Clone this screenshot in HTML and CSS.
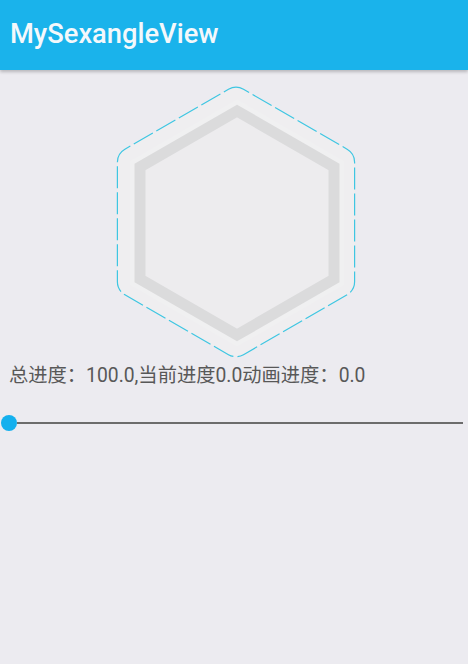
FILE: index.html
```html
<!DOCTYPE html>
<html>
<head>
<meta charset="utf-8">
<link rel="stylesheet" href="styles.css">
</head>
<body>
<header class="toolbar"><h1 class="title">MySexangleView</h1></header>
<main class="content">
  <div class="hex-wrap">
    <svg class="hex" width="244" height="280" viewBox="0 0 244 280">
      <path class="hex-outer" d="M114.5 7.33 A15 15 0 0 1 129.5 7.33 L233.1 67.17 A15 15 0 0 1 240.6 80.16 L240.6 199.84 A15 15 0 0 1 233.1 212.83 L129.5 272.67 A15 15 0 0 1 114.5 272.67 L10.9 212.83 A15 15 0 0 1 3.4 199.84 L3.4 80.16 A15 15 0 0 1 10.9 67.17 Z"/>
      <path class="hex-halo" d="M123 29 L220 85 L220 197 L123 253 L26 197 L26 85 Z"/>
      <path class="hex-inner" d="M123 29 L220 85 L220 197 L123 253 L26 197 L26 85 Z"/>
    </svg>
  </div>
  <p class="progress-text">总进度：100.0,当前进度0.0动画进度：0.0</p>
  <div class="slider">
    <span class="slider-thumb"></span>
    <span class="slider-track"></span>
  </div>
</main>
</body>
</html>
```
FILE: styles.css
```css
html, body {
  margin: 0;
  padding: 0;
}
body {
  width: 468px;
  height: 664px;
  background: #ecebf0;
  font-family: Roboto, "Noto Sans CJK SC", sans-serif;
  overflow: hidden;
}
.toolbar {
  height: 70px;
  background: #1ab3eb;
  display: flex;
  align-items: center;
  padding-left: 10px;
  box-shadow: 0 2px 3px rgba(0, 0, 0, 0.22);
  position: relative;
}
.title {
  margin: 0;
  margin-top: -3px;
  font-family: Roboto, sans-serif;
  font-weight: 500;
  font-size: 27.3px;
  color: #f4f8fb;
  letter-spacing: 0;
}
.content {
  display: flex;
  flex-direction: column;
}
.hex-wrap {
  margin-top: 12px;
  display: flex;
  justify-content: center;
  padding-left: 4px;
}
.hex {
  display: block;
}
.hex-outer {
  fill: #efeef0;
  stroke: #3ec6e2;
  stroke-width: 1.2;
  stroke-dasharray: 22 4;
}
.hex-halo {
  fill: none;
  stroke: #f0f0f1;
  stroke-width: 20;
  stroke-linejoin: miter;
}
.hex-inner {
  fill: #edecee;
  stroke: #dbdbdc;
  stroke-width: 11;
  stroke-linejoin: miter;
}
.progress-text {
  margin: 2px 0 0 9px;
  font-size: 19.3px;
  line-height: 24px;
  color: #585858;
  white-space: nowrap;
}
.slider {
  margin-top: 25px;
  height: 20px;
  display: flex;
  align-items: center;
  padding-left: 1px;
}
.slider-thumb {
  width: 16px;
  height: 16px;
  border-radius: 50%;
  background: #14b0ee;
  flex: none;
}
.slider-track {
  width: 446px;
  height: 2px;
  background: #6c6c6c;
}
```
